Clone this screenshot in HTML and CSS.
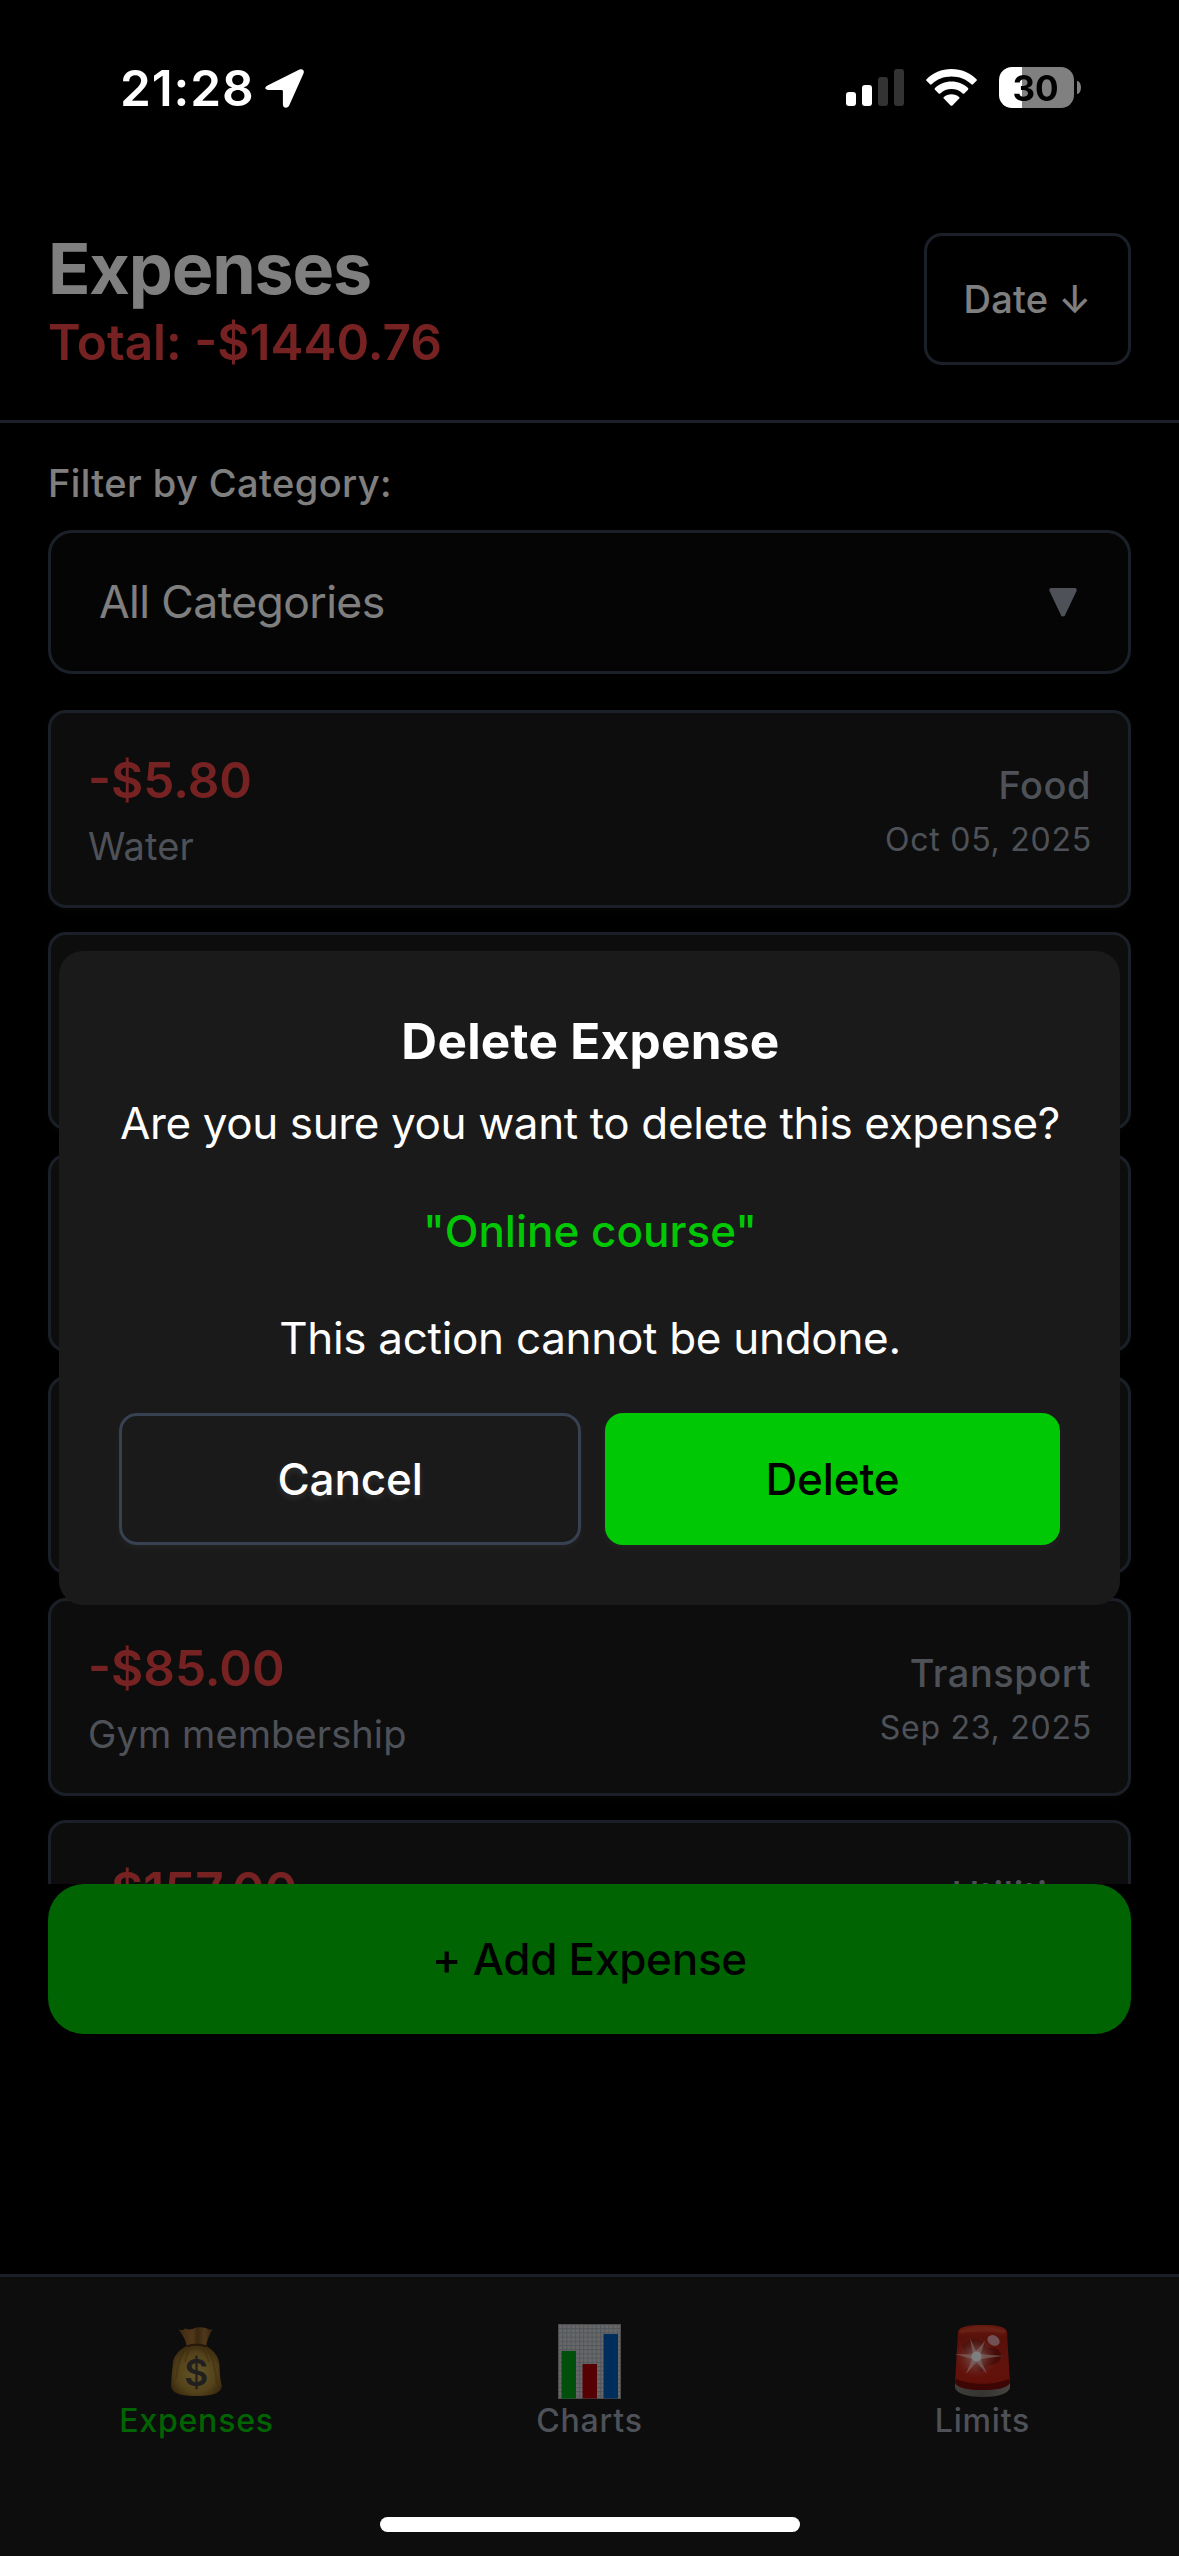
FILE: index.html
```html
<!DOCTYPE html>
<html lang="en">
<head>
<meta charset="utf-8">
<title>Expenses</title>
<link rel="stylesheet" href="styles.css">
</head>
<body>
<div class="app">
  <div class="status-bar">
    <span class="time">21:28</span>
    <svg class="location" viewBox="0 0 39 39"><path d="M3 16.2 34.5.6C37.300-.8 39.600 1.300 38.600 4.200L24.300 36.300C23 39.800 17.900 39.400 17.900 35.400V22.300Q17.900 21 16.600 21H3.500C-.4 21-1 18.100 3 16.200Z" fill="#fff"/></svg>
    <div class="status-icons">
      <svg width="58" height="37" viewBox="0 0 58 37">
        <rect y="23" width="10" height="14" rx="3" fill="#fff"/>
        <rect x="16" y="16" width="10" height="21" rx="3" fill="#fff"/>
        <rect x="32" y="8" width="10" height="29" rx="3" fill="#333"/>
        <rect x="48" width="10" height="37" rx="3" fill="#333"/>
      </svg>
      <svg width="51" height="37" viewBox="0 0 51 37" fill="#fff">
        <path d="M25.500 0C35.500 0 44.300 3.900 50.500 10.200Q51.300 11 50.500 11.800L47 15.300Q46.200 16.100 45.400 15.300C40.100 10.300 33.200 7.600 25.500 7.600S10.900 10.300 5.600 15.300Q4.800 16.100 4 15.300L.5 11.800Q-.3 11 .5 10.200C6.700 3.900 15.500 0 25.500 0Z"/>
        <path d="M25.500 12.600C32 12.600 37.700 15 42 19.100Q42.800 19.900 42 20.700L38.300 24.400Q37.500 25.100 36.700 24.400C33.600 21.600 29.800 20.100 25.500 20.100S17.400 21.600 14.300 24.400Q13.500 25.100 12.700 24.400L9 20.700Q8.200 19.900 9 19.100C13.300 15 19 12.600 25.500 12.600Z"/>
        <path d="M25.500 25.300C28.400 25.300 31 26.300 33.100 28Q34 28.800 33.200 29.600L26.400 36.400Q25.500 37.200 24.600 36.400L17.800 29.600Q17 28.800 17.900 28C20 26.300 22.600 25.300 25.500 25.300Z"/>
      </svg>
      <div class="battery"><span class="battery-level">30</span><span class="battery-cap"></span></div>
    </div>
  </div>

  <header class="header">
    <div>
      <h1 class="title">Expenses</h1>
      <p class="total">Total: -$1440.76</p>
    </div>
    <button class="sort">Date ↓</button>
  </header>

  <section class="filter">
    <label class="filter-label">Filter by Category:</label>
    <div class="select">
      <span>All Categories</span>
      <svg width="28" height="29" viewBox="0 0 28 29"><path d="M2.200 0H25.800Q28.500.3 27.500 3L16 27.200Q14 30 12 27.200L.5 3Q-.5.300 2.200 0Z" fill="#9ca3af"/></svg>
    </div>
  </section>

  <main class="list">
    <article class="card">
      <div><p class="amount">-$5.80</p><p class="note">Water</p></div>
      <div class="meta"><p class="category">Food</p><p class="date">Oct 05, 2025</p></div>
    </article>
    <article class="card"></article>
    <article class="card"></article>
    <article class="card"></article>
    <article class="card">
      <div><p class="amount">-$85.00</p><p class="note">Gym membership</p></div>
      <div class="meta"><p class="category">Transport</p><p class="date">Sep 23, 2025</p></div>
    </article>
    <article class="card">
      <div><p class="amount">-$157.00</p><p class="note">&nbsp;</p></div>
      <div class="meta"><p class="category">Utilities</p><p class="date">&nbsp;</p></div>
    </article>
  </main>

  <button class="add">+ Add Expense</button>

  <nav class="tabs">
    <div class="tab tab-active">
      <svg class="tab-icon" viewBox="0 0 75 75">
        <defs>
          <radialGradient id="bag" cx=".5" cy=".55" r=".62"><stop offset="0" stop-color="#c9ab50"/><stop offset=".6" stop-color="#a98735"/><stop offset="1" stop-color="#664416"/></radialGradient>
          <linearGradient id="neck" x1="0" x2="1"><stop offset="0" stop-color="#7b511f"/><stop offset=".4" stop-color="#a57134"/><stop offset=".55" stop-color="#75501f"/><stop offset=".75" stop-color="#a07038"/><stop offset="1" stop-color="#6b461b"/></linearGradient>
        </defs>
        <path d="M19.500 5.500Q24 7 26 4.500Q32 6.500 36 4Q40 2.500 47 4Q50 6.500 54 5.500Q49 11 47 23H28Q26 13 19.500 5.500Z" fill="url(#neck)"/>
        <path d="M28 22Q37.500 19.500 47 22C54 25.500 60 32 60.500 41Q60.500 54 63 62C62 70 52 72 37.500 72S13 70 12 62Q12.500 50 14 38C15 31 21 25 28 22Z" fill="url(#bag)"/>
        <path d="M28 23Q19 33 17 55M32 23Q27 31 26 38M42 23Q48 30 50 38M47 23Q56 36 58 60" fill="none" stroke="#7d5b20" stroke-opacity=".55" stroke-width="2"/>
        <path d="M28 22.200Q37.500 19.500 47 22.200" fill="none" stroke="#4a3015" stroke-width="2"/>
        <text class="bag-sign" x="37.300" y="61.500">$</text>
      </svg>
      <span>Expenses</span>
    </div>
    <div class="tab">
      <svg class="tab-icon" viewBox="0 0 75 75">
        <defs>
          <pattern id="grid" width="4.200" height="4.200" patternUnits="userSpaceOnUse" x="6"><rect width="4.200" height="4.200" fill="#d0d0d2"/><path d="M0 .5H4.200M.5 0V4.200" stroke="#a5afba" stroke-width="1"/></pattern>
        </defs>
        <rect x="6" width="63" height="75" fill="#99989a"/>
        <rect x="7" y="1" width="61" height="73" fill="url(#grid)"/>
        <rect x="9.500" y="27" width="14.500" height="47.500" fill="#00a016"/>
        <rect x="30.500" y="40" width="14.500" height="34.500" fill="#ab0006"/>
        <rect x="51.500" y="10" width="14.500" height="64.500" fill="#005cb8"/>
      </svg>
      <span>Charts</span>
    </div>
    <div class="tab">
      <svg class="tab-icon" viewBox="0 0 75 75">
        <defs>
          <linearGradient id="lamp" x1="0" x2="0" y1="0" y2="1"><stop offset="0" stop-color="#d03620"/><stop offset=".2" stop-color="#b02214"/><stop offset=".6" stop-color="#c02618"/><stop offset=".85" stop-color="#c42214"/><stop offset="1" stop-color="#8a1008"/></linearGradient>
          <linearGradient id="base" x1="0" x2="1"><stop offset="0" stop-color="#807d76"/><stop offset=".5" stop-color="#6a6862"/><stop offset="1" stop-color="#8b8983"/></linearGradient>
          <radialGradient id="glow"><stop offset="0" stop-color="#fff"/><stop offset=".25" stop-color="#f0aaa2" stop-opacity=".9"/><stop offset="1" stop-color="#e04a3c" stop-opacity="0"/></radialGradient>
        </defs>
        <path d="M10 58V64C12 70 24 73 38 73S63 70 65 64V58Z" fill="url(#base)"/>
        <path d="M13 8C14 2.500 24 1 37.500 1S61 2.500 62 8L65 59C62 64 52 66 37.500 66S13 64 10 59Z" fill="url(#lamp)"/>
        <path d="M11 55Q37.500 65 64 55L65 59Q60 66 37.500 66T10 59Z" fill="#7a0d08"/>
        <path d="M15 6Q37.500-1 60 6Q61 10 57 9Q37.500 6 18 9Q14 10 15 6Z" fill="#d84a30" fill-opacity=".7"/>
        <path d="M17 22C25 12 36 12 42 24C50 22 57 26 56 32C56 38 49 41 42 42L36 48Q24 40 17 22Z" fill="#5c0905" fill-opacity=".5"/>
        <ellipse cx="48.500" cy="16.500" rx="6.500" ry="5" transform="rotate(30 48.500 16.500)" fill="#e2a3a6"/>
        <circle cx="31" cy="33" r="21" fill="url(#glow)" fill-opacity=".85"/>
        <path d="M10 30 28 30.500 25 14 31 27 40 17 35.500 30 58 32 35.500 35 42 50 31.500 38 21 50 27 35Z" fill="#fbdcd8" fill-opacity=".6"/>
        <circle cx="31.500" cy="32.500" r="5" fill="#fff"/>
      </svg>
      <span>Limits</span>
    </div>
  </nav>
</div>

<div class="overlay">
  <div class="modal" role="dialog">
    <h2 class="modal-title">Delete Expense</h2>
    <div class="modal-body">
      <p>Are you sure you want to delete this expense?</p>
      <p class="modal-name">"Online course"</p>
      <p class="modal-hint">This action cannot be undone.</p>
    </div>
    <div class="modal-actions">
      <button class="btn btn-cancel">Cancel</button>
      <button class="btn btn-delete">Delete</button>
    </div>
  </div>
</div>
<div class="home-indicator"></div>
</body>
</html>
```
FILE: styles.css
```css
* {
  box-sizing: border-box;
  margin: 0;
  padding: 0;
}

body {
  width: 1179px;
  height: 2556px;
  overflow: hidden;
  background: #000;
  color: #fff;
  font-family: Inter, "Liberation Sans", sans-serif;
}

button {
  font-family: inherit;
  color: inherit;
}

svg {
  display: block;
  flex: none;
}

.app {
  display: flex;
  flex-direction: column;
  height: 2556px;
}

/* status bar sits above the dimming layer */
.status-bar {
  position: relative;
  z-index: 2;
  display: flex;
  align-items: flex-start;
  height: 177px;
  padding: 67px 98px 0 120px;
}

.time {
  width: 145px;
  font-size: 49.5px;
  font-weight: 600;
  line-height: 42px;
  letter-spacing: 0.9px;
}

.location {
  width: 39px;
  height: 39px;
  margin-top: 2px;
}

.status-icons {
  display: flex;
  align-items: center;
  gap: 22px;
  height: 41px;
  margin-left: auto;
}

.battery {
  display: flex;
  align-items: center;
  gap: 3px;
}

.battery-level {
  width: 75px;
  height: 41px;
  padding-right: 2px;
  border-radius: 13px;
  background: linear-gradient(90deg, #fff 23px, #808080 23px);
  color: #000;
  font-size: 35px;
  font-weight: 700;
  line-height: 42px;
  text-align: center;
}

.battery-cap {
  width: 4px;
  height: 13px;
  border-radius: 0 4px 4px 0 / 0 7px 7px 0;
  background: #808080;
}

.header {
  display: flex;
  align-items: center;
  justify-content: space-between;
  padding: 48px;
  border-bottom: 3px solid #374151;
}

.title {
  font-size: 70px;
  font-weight: 700;
  line-height: 87px;
  letter-spacing: -1.2px;
}

.total {
  color: #ef4444;
  font-size: 49.5px;
  font-weight: 600;
  line-height: 60px;
}

.sort {
  width: 207px;
  height: 132px;
  border: 3px solid #374151;
  border-radius: 18px;
  background: none;
  font-size: 38px;
  font-weight: 500;
  letter-spacing: 0.2px;
}

.filter {
  padding: 36px 48px;
}

.filter-label {
  display: block;
  margin-bottom: 23px;
  font-size: 38px;
  font-weight: 500;
  line-height: 48px;
  letter-spacing: 0.42px;
}

.select {
  display: flex;
  align-items: center;
  justify-content: space-between;
  height: 144px;
  padding: 0 51px 0 48px;
  border: 3px solid #374151;
  border-radius: 24px;
  background: #0a0a0a;
  font-size: 44.5px;
  letter-spacing: -0.6px;
}

.list {
  display: flex;
  flex-direction: column;
  gap: 24px;
  height: 1174px;
  padding: 0 48px;
  overflow: hidden;
}

.card {
  display: flex;
  flex: none;
  align-items: center;
  justify-content: space-between;
  height: 198px;
  padding: 2px 36px 0 37px;
  border: 3px solid #374151;
  border-radius: 18px;
  background: #1a1a1a;
  box-shadow: 0 3px 9px rgba(255, 255, 255, 0.04);
}

.amount {
  margin-bottom: 12px;
  color: #ef4444;
  font-size: 49.5px;
  font-weight: 600;
  line-height: 60px;
}

.note {
  color: #9ca3af;
  font-size: 38px;
  line-height: 48px;
  letter-spacing: 0.1px;
}

.meta {
  padding-top: 1px;
  color: #9ca3af;
  text-align: right;
}

.category {
  margin-bottom: 10px;
  padding-right: 1px;
  font-size: 38px;
  font-weight: 500;
  line-height: 48px;
  letter-spacing: 0.5px;
}

.date {
  font-size: 32px;
  line-height: 42px;
  letter-spacing: 0.75px;
}

.add {
  height: 150px;
  margin: 0 48px 240px;
  border: 0;
  border-radius: 36px;
  background: #00c805;
  color: #000;
  font-size: 44px;
  font-weight: 500;
  letter-spacing: -0.25px;
}

.tabs {
  display: grid;
  grid-template-columns: repeat(3, 1fr);
  height: 282px;
  padding-top: 47px;
  border-top: 3px solid #374151;
  background: #1a1a1a;
}

.tab {
  display: flex;
  flex-direction: column;
  align-items: center;
  color: #9ca3af;
  font-size: 32px;
  font-weight: 500;
  line-height: 44px;
  letter-spacing: 0.8px;
}

.tab-active {
  color: #00c805;
}

.tab-icon {
  width: 75px;
  height: 75px;
}

.bag-sign {
  fill: #453e42;
  font-size: 37px;
  font-weight: 600;
  letter-spacing: 0;
  text-anchor: middle;
}

.overlay {
  position: fixed;
  inset: 0;
  z-index: 1;
  display: flex;
  align-items: center;
  justify-content: center;
  background: rgba(0, 0, 0, 0.5);
}

.modal {
  width: 1061px;
  padding: 60px;
  border-radius: 24px;
  background: #1a1a1a;
  text-align: center;
}

.modal-title {
  margin-bottom: 24px;
  padding-left: 2px;
  font-size: 49.5px;
  font-weight: 700;
  line-height: 61px;
  letter-spacing: 0.27px;
}

.modal-body {
  display: flex;
  flex-direction: column;
  gap: 53.7px;
  margin-bottom: 48px;
  padding-left: 1px;
  font-size: 44px;
  line-height: 54px;
  letter-spacing: -0.38px;
  white-space: nowrap;
}

.modal-name {
  color: #00c805;
  font-weight: 500;
  letter-spacing: 0;
}

.modal-hint {
  letter-spacing: -0.3px;
}

.modal-actions {
  display: flex;
  gap: 24px;
}

.btn {
  height: 132px;
  border: 0;
  border-radius: 18px;
  font-size: 44px;
  font-weight: 500;
  letter-spacing: -0.15px;
  box-shadow: 0 3px 9px rgba(255, 255, 255, 0.04);
}

.btn-cancel {
  width: 462px;
  border: 3px solid #374151;
  background: none;
  text-shadow: 0 3px 6px rgba(255, 255, 255, 0.1);
}

.btn-delete {
  flex: 1;
  background: #00c805;
  color: #000;
}

.home-indicator {
  position: fixed;
  bottom: 24px;
  left: 380px;
  z-index: 2;
  width: 420px;
  height: 15px;
  border-radius: 8px;
  background: #fff;
}
```
